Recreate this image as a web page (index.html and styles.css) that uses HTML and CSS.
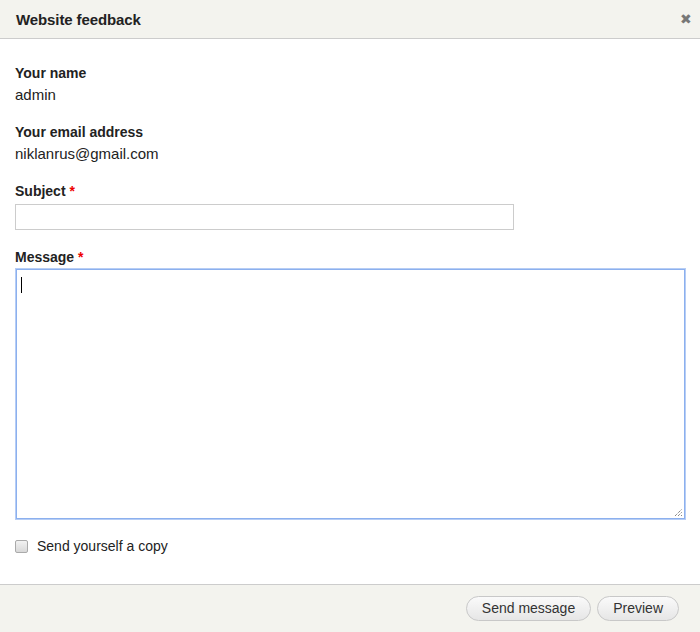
FILE: index.html
```html
<!DOCTYPE html>
<html>
<head>
<meta charset="utf-8">
<link rel="stylesheet" href="styles.css">
</head>
<body>
<div class="dialog">
  <div class="titlebar">
    <span class="title">Website feedback</span>
    <span class="close">&#x2716;</span>
  </div>
  <div class="content">
    <div class="item">
      <div class="label">Your name</div>
      <div class="value">admin</div>
    </div>
    <div class="item">
      <div class="label">Your email address</div>
      <div class="value">niklanrus@gmail.com</div>
    </div>
    <div class="item field subject">
      <div class="label">Subject <span class="req">*</span></div>
      <div class="input"></div>
    </div>
    <div class="item field message">
      <div class="label">Message <span class="req">*</span></div>
      <div class="textarea"><span class="caret"></span>
        <svg class="grip" width="8" height="8" viewBox="0 0 8 8"><path d="M1 8L8 1M4 8L8 4M7 8L8 7" stroke="#555" stroke-width="1" stroke-dasharray="1 1"/></svg>
      </div>
    </div>
    <div class="check">
      <span class="box"></span>
      <span class="check-label">Send yourself a copy</span>
    </div>
  </div>
  <div class="buttonpane">
    <span class="btn">Send message</span>
    <span class="btn">Preview</span>
  </div>
</div>
</body>
</html>
```
FILE: styles.css
```css
html, body { margin: 0; padding: 0; background: #fff; }
body { font-family: "Liberation Sans", Arial, sans-serif; color: #222; width: 700px; height: 632px; overflow: hidden; }
.dialog { display: flex; flex-direction: column; height: 632px; }
.titlebar { height: 38px; background: #f3f3ee; border-bottom: 1px solid #ccc; display: flex; align-items: center; justify-content: space-between; padding: 0 8px 0 16px; box-sizing: content-box; }
.title { font-weight: bold; font-size: 15px; color: #222; letter-spacing: -0.1px; }
.close { font-size: 14px; color: #777; }
.content { flex: 1; padding: 25px 15px 0 15px; }
.item { margin-bottom: 19px; }
.label { font-weight: bold; font-size: 14px; line-height: 18px; color: #222; }
.value { font-size: 15px; line-height: 18px; margin-top: 4px; color: #222; }
.req { color: #e00; }
.field .label { margin-bottom: 4px; }
.subject { margin-bottom: 18px; }
.message .label { margin-bottom: 3px; }
.input { width: 497px; height: 24px; border: 1px solid #ccc; }
.textarea { position: relative; height: 248px; border: 1px solid #8cb0ee; box-shadow: 0 0 0 1px #b6cdf5; margin-left: 1px; width: 667px; }
.caret { position: absolute; left: 4px; top: 7px; width: 1px; height: 16px; background: #000; }
.grip { position: absolute; right: 2px; bottom: 2px; }
.check { display: flex; align-items: center; margin-top: 16px; gap: 9px; }
.box { width: 11px; height: 11px; border: 1px solid #aaa; border-radius: 2px; background: linear-gradient(#f2f2f2, #d8d8d8); }
.check-label { font-size: 14px; color: #222; }
.buttonpane { height: 47px; background: #f3f3ee; border-top: 1px solid #ccc; display: flex; justify-content: flex-end; align-items: center; gap: 6px; padding-right: 21px; }
.btn { font-size: 14px; color: #333; height: 23px; line-height: 23px; padding: 0 15px; border: 1px solid #c8c8c8; border-radius: 13px; background: linear-gradient(#fafafa, #e6e6e6); }
```
